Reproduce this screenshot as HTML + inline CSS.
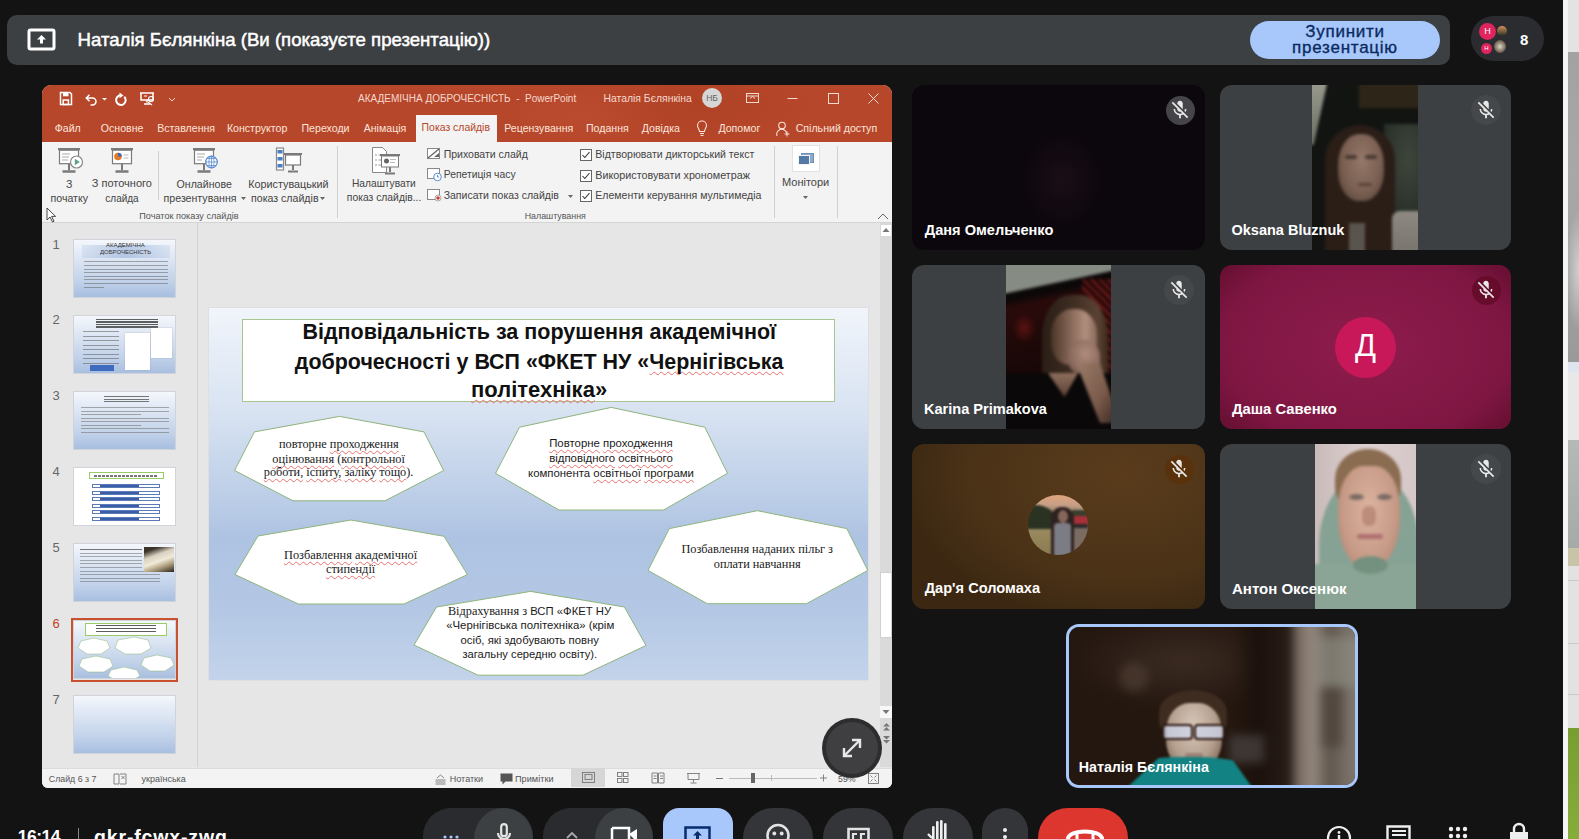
<!DOCTYPE html>
<html><head><meta charset="utf-8">
<style>
*{box-sizing:border-box;margin:0;padding:0}
html,body{width:1579px;height:839px;overflow:hidden;background:#131314;font-family:"Liberation Sans",sans-serif;position:relative}
.a{position:absolute}
svg{position:absolute;overflow:visible}
#ppt{left:42px;top:85px;width:850px;height:703px;background:#e6e6e6;border-radius:9px 9px 6px 6px;overflow:hidden}
.tile{position:absolute;border-radius:12px;overflow:hidden;background:#3c4043}
.name{position:absolute;color:#fff;font-size:14.6px;font-weight:bold;white-space:nowrap;letter-spacing:0px}
.mic{position:absolute;width:29px;height:29px;border-radius:50%;background:rgba(80,82,86,.85)}
.sq{text-decoration:underline wavy #e87070;text-decoration-thickness:0.8px;text-underline-offset:1.5px;text-decoration-skip-ink:none}

</style></head>
<body>
<div class="a" style="left:7px;top:15px;width:1443px;height:50px;background:#3c4043;border-radius:10px"></div>
<svg style="left:27px;top:28px" width="30" height="24" viewBox="0 0 30 24"><rect x="2" y="2" width="25" height="19" rx="1.5" fill="none" stroke="#fff" stroke-width="3"/><path d="M14.5 7 l-4.5 4.5 h3 v4 h3 v-4 h3z" fill="#fff"/></svg><div class="a" style="left:77.6px;top:29.3px;font-size:18.6px;color:#fff;font-weight:normal;white-space:nowrap;line-height:normal;-webkit-text-stroke:0.5px #fff">Наталія Бєлянкіна (Ви (показуєте презентацію))</div>
<div class="a" style="left:1250px;top:21px;width:190px;height:38px;background:#a8c7fa;border-radius:19px"></div>
<div class="a" style="left:1250px;top:22px;width:190px;text-align:center;font-size:17px;line-height:15.5px;color:#0a2b62;letter-spacing:0.75px;padding-top:2px;-webkit-text-stroke:0.35px #0a2b62">Зупинити<br>презентацію</div><div class="a" style="left:1471px;top:16px;width:73px;height:45px;background:#2b2c2f;border-radius:23px"></div>
<div class="a" style="left:1479px;top:23px;width:17px;height:17px;background:#e0245e;border-radius:50%;color:#fff;font-size:9px;line-height:17px;text-align:center">Н</div>
<div class="a" style="left:1481px;top:43px;width:11px;height:11px;background:#e0245e;border-radius:50%;color:#fff;font-size:6px;line-height:11px;text-align:center">Н</div>
<div class="a" style="left:1497px;top:26px;width:10px;height:10px;background:linear-gradient(#d88a5a,#6a5a3a 60%,#2a2a2a);border-radius:50%"></div>
<div class="a" style="left:1494px;top:40px;width:12px;height:13px;background:radial-gradient(circle at 50% 50%,#d8d8c8,#7a6a5a 60%,#333);border-radius:50%"></div>
<div class="a" style="left:1520px;top:30.5px;font-size:15px;color:#fff;font-weight:bold;white-space:nowrap;line-height:normal;">8</div>
<div class="a" style="left:1563px;top:0px;width:16px;height:839px;background:#f4f4f4"></div>
<div class="a" style="left:1568px;top:0px;width:11px;height:52px;background:#e3e3e3"></div>
<div class="a" style="left:1568px;top:52px;width:11px;height:310px;background:linear-gradient(#a2a2a2,#a8a8a8 40%,#9a9a9a)"></div>
<div class="a" style="left:1568px;top:200px;width:11px;height:140px;background:radial-gradient(ellipse 14px 60px at 100% 50%,#d0d0d0,transparent)"></div>
<div class="a" style="left:1568px;top:362px;width:11px;height:10px;background:#dfe5ee"></div>
<div class="a" style="left:1568px;top:372px;width:11px;height:68px;background:#e8e8e8"></div>
<div class="a" style="left:1568px;top:440px;width:11px;height:112px;background:linear-gradient(#b6bab6,#a6aaa6)"></div>
<div class="a" style="left:1568px;top:548px;width:11px;height:18px;background:#c8c4a8"></div>
<div class="a" style="left:1568px;top:566px;width:11px;height:162px;background:#e2e2e2"></div>
<div class="a" style="left:1568px;top:580px;width:11px;height:1px;background:#c8c8c8"></div>
<div class="a" style="left:1568px;top:643px;width:11px;height:1px;background:#c8c8c8"></div>
<div class="a" style="left:1568px;top:694px;width:11px;height:1px;background:#c8c8c8"></div>
<div class="a" style="left:1568px;top:728px;width:11px;height:111px;background:linear-gradient(#789e30,#86ac3c)"></div>

<div id="ppt" class="a">
<div class="a" style="left:0.0px;top:0.0px;width:850.0px;height:57.0px;background:#b7472a"></div>
<div class="a" style="left:478.0px;top:0.0px;width:372.0px;height:57.0px;background:radial-gradient(ellipse 120px 40px at 180px 20px,rgba(160,55,30,.35),transparent),radial-gradient(ellipse 90px 30px at 60px 30px,rgba(200,90,60,.25),transparent)"></div>
<svg style="left:17px;top:5px" width="150" height="18" viewBox="0 0 150 18" fill="none" stroke="#fff" stroke-width="1.5">
 <path d="M1.5 2.5 h9.5 l1.5 1.5 v10.5 h-11z"/><rect x="4" y="2.5" width="5.5" height="3.8" fill="#fff" stroke="none"/><rect x="4.2" y="10" width="5.2" height="4.5"/>
 <path d="M28 8 h5.5 a3.5 3.5 0 0 1 0 7 h-2"/><path d="M30.5 4.8 l-3.2 3.2 l3.2 3.2"/>
 <path d="M43 8 l2.5 2.5 l2.5-2.5z" fill="#fff" stroke="none"/>
 <path d="M62 5.3 a4.8 4.8 0 1 0 3.3 1.4" stroke-width="2"/><path d="M60.5 2.5 l4 3 l-4 2.8z" fill="#fff" stroke="none"/>
 <path d="M81 3 h14 M82 3 v7 h12 v-7 M88 10 v2.5 M85 14 h6" /><path d="M85 6 h3 M89 12 l4 3" stroke-width="1.2"/><circle cx="92" cy="9" r="2.5" stroke-width="1.2"/>
 <path d="M110 8 l3 3 l3-3" stroke-width="1" stroke="#f3d3c8"/>
</svg><div class="a" style="left:316.0px;top:8.3px;font-size:10.0px;color:#f5d9d0;font-weight:normal;font-family:'Liberation Sans';white-space:nowrap;line-height:normal;">АКАДЕМІЧНА ДОБРОЧЕСНІСТЬ&nbsp; - &nbsp;PowerPoint</div>
<div class="a" style="left:561.5px;top:8.1px;font-size:10.4px;color:#f5d9d0;font-weight:normal;font-family:'Liberation Sans';white-space:nowrap;line-height:normal;">Наталія Бєлянкіна</div>
<div class="a" style="left:660.0px;top:3.0px;width:20.0px;height:20.0px;border-radius:50%;background:#d6d6d6;color:#666;font-size:8.5px;line-height:20px;text-align:center">НБ</div>
<svg style="left:700px;top:5px" width="149" height="16" viewBox="0 0 149 16" fill="none" stroke="#f5d9d0" stroke-width="1">
 <rect x="4.5" y="3.5" width="12" height="9"/><path d="M4.5 6 h12"/><path d="M8 8.5 l2.5 -2 l2.5 2" />
 <path d="M45.5 8.5 h10"/>
 <rect x="86.5" y="3.5" width="10" height="10"/>
 <path d="M126.5 3.5 l10 10 M136.5 3.5 l-10 10"/>
</svg><div class="a" style="left:374.0px;top:30.0px;width:81.0px;height:27.0px;background:#f3f3f3"></div>
<div class="a" style="left:12.7px;top:37.0px;font-size:10.6px;color:#fbe4dc;font-weight:normal;font-family:'Liberation Sans';white-space:nowrap;line-height:normal;">Файл</div>
<div class="a" style="left:58.8px;top:37.0px;font-size:10.6px;color:#fbe4dc;font-weight:normal;font-family:'Liberation Sans';white-space:nowrap;line-height:normal;">Основне</div>
<div class="a" style="left:115.2px;top:37.0px;font-size:10.6px;color:#fbe4dc;font-weight:normal;font-family:'Liberation Sans';white-space:nowrap;line-height:normal;">Вставлення</div>
<div class="a" style="left:184.9px;top:37.0px;font-size:10.6px;color:#fbe4dc;font-weight:normal;font-family:'Liberation Sans';white-space:nowrap;line-height:normal;">Конструктор</div>
<div class="a" style="left:259.5px;top:37.0px;font-size:10.6px;color:#fbe4dc;font-weight:normal;font-family:'Liberation Sans';white-space:nowrap;line-height:normal;">Переходи</div>
<div class="a" style="left:321.7px;top:37.0px;font-size:10.6px;color:#fbe4dc;font-weight:normal;font-family:'Liberation Sans';white-space:nowrap;line-height:normal;">Анімація</div>
<div class="a" style="left:462.2px;top:37.0px;font-size:10.6px;color:#fbe4dc;font-weight:normal;font-family:'Liberation Sans';white-space:nowrap;line-height:normal;">Рецензування</div>
<div class="a" style="left:544.0px;top:37.0px;font-size:10.6px;color:#fbe4dc;font-weight:normal;font-family:'Liberation Sans';white-space:nowrap;line-height:normal;">Подання</div>
<div class="a" style="left:599.8px;top:37.0px;font-size:10.6px;color:#fbe4dc;font-weight:normal;font-family:'Liberation Sans';white-space:nowrap;line-height:normal;">Довідка</div>
<div class="a" style="left:676.4px;top:37.0px;font-size:10.6px;color:#fbe4dc;font-weight:normal;font-family:'Liberation Sans';white-space:nowrap;line-height:normal;">Допомог</div>
<div class="a" style="left:753.7px;top:37.0px;font-size:10.6px;color:#fbe4dc;font-weight:normal;font-family:'Liberation Sans';white-space:nowrap;line-height:normal;">Спільний доступ</div>
<div class="a" style="left:379.6px;top:37.1px;font-size:10.45px;color:#b7472a;font-weight:normal;font-family:'Liberation Sans';white-space:nowrap;line-height:normal;">Показ слайдів</div>
<svg style="left:653px;top:35px" width="14" height="18" viewBox="0 0 14 18" fill="none" stroke="#fbe4dc" stroke-width="1.1"><path d="M4.5 11.5 C4.5 9 2.5 8 2.5 5.5 a4.5 4.5 0 0 1 9 0 C11.5 8 9.5 9 9.5 11.5z M5 13.5 h4 M5.5 15.5 h3"/></svg><svg style="left:734px;top:36px" width="15" height="16" viewBox="0 0 15 16" fill="none" stroke="#fbe4dc" stroke-width="1.1"><circle cx="6" cy="4.5" r="3.3"/><path d="M1 15 a5 5 0 0 1 9.5 -3.5 M11 10.5 v5 M8.5 13 h5"/></svg><div class="a" style="left:0.0px;top:57.0px;width:850.0px;height:80.0px;background:#f3f3f3"></div>
<div class="a" style="left:0.0px;top:137.0px;width:850.0px;height:1.0px;background:#d5d5d5"></div>
<svg style="left:14px;top:62px" width="28" height="28" viewBox="0 0 28 28" fill="none" stroke="#7a7a7a" stroke-width="1.2">
 <rect x="2" y="1" width="22" height="2.2" fill="#7a7a7a" stroke="none"/><rect x="3.5" y="3.2" width="19" height="13.5" fill="#fff"/>
 <path d="M13 16.7 v6.5" stroke-width="2"/><path d="M6.5 24.5 h13" stroke-width="2.5"/>
 <path d="M6 7 h8 M6 10 h7 M6 13 h6" stroke="#aaa"/><circle cx="20.5" cy="15" r="6" fill="#fff" stroke="#888"/><path d="M18.8 11.8 v6.4 l5-3.2z" fill="#5e9e8a" stroke="none"/></svg><svg style="left:67px;top:62px" width="28" height="28" viewBox="0 0 28 28" fill="none" stroke="#7a7a7a" stroke-width="1.2">
 <rect x="2" y="1" width="22" height="2.2" fill="#7a7a7a" stroke="none"/><rect x="3.5" y="3.2" width="19" height="13.5" fill="#fff"/>
 <path d="M13 16.7 v6.5" stroke-width="2"/><path d="M6.5 24.5 h13" stroke-width="2.5"/>
 <circle cx="9" cy="9.5" r="3.8" fill="#e57a2a" stroke="none"/><path d="M9 5.7 a3.8 3.8 0 0 1 3.8 3.8 h-3.8z" fill="#3b6bb5" stroke="none"/><path d="M14.5 8 h5 M14.5 11 h5" stroke="#bbb"/></svg><div class="a" style="left:116.0px;top:66.0px;width:1.0px;height:49.0px;background:#d0d0d0"></div>
<svg style="left:149px;top:62px" width="28" height="28" viewBox="0 0 28 28" fill="none" stroke="#7a7a7a" stroke-width="1.2">
 <rect x="2" y="1" width="22" height="2.2" fill="#7a7a7a" stroke="none"/><rect x="3.5" y="3.2" width="19" height="13.5" fill="#fff"/>
 <path d="M13 16.7 v6.5" stroke-width="2"/><path d="M6.5 24.5 h13" stroke-width="2.5"/>
 <path d="M6 7 h8 M6 10 h7 M6 13 h5" stroke="#aaa"/><circle cx="20.5" cy="15" r="5.8" fill="#fff" stroke="#5b8bd0"/><path d="M14.7 15 h11.6 M20.5 9.2 v11.6 M16 11.5 h9 M16 18.5 h9" stroke="#5b8bd0" stroke-width="0.8"/><ellipse cx="20.5" cy="15" rx="2.6" ry="5.8" stroke="#5b8bd0" stroke-width="0.8"/></svg><svg style="left:234px;top:62px" width="28" height="28" viewBox="0 0 28 28" fill="none" stroke="#7a7a7a" stroke-width="1.2">
 <rect x="0.5" y="1" width="7" height="22" fill="#fff" stroke="#888"/><rect x="1.5" y="3" width="5" height="3.5" fill="#4a7fc4" stroke="none"/><rect x="1.5" y="10" width="5" height="3.5" fill="#4a7fc4" stroke="none"/><rect x="1.5" y="17" width="5" height="3.5" fill="#4a7fc4" stroke="none"/>
 <rect x="8" y="6" width="18" height="2" fill="#7a7a7a" stroke="none"/><rect x="9.5" y="8" width="15" height="10" fill="#fff"/><path d="M17 18 v5" stroke-width="2"/><path d="M12 24.5 h10" stroke-width="2.2"/></svg><div class="a" style="left:24.0px;top:92.6px;font-size:10.6px;color:#444;font-weight:normal;font-family:'Liberation Sans';white-space:nowrap;line-height:normal;">З</div>
<div class="a" style="left:8.5px;top:107.1px;font-size:10.6px;color:#444;font-weight:normal;font-family:'Liberation Sans';white-space:nowrap;line-height:normal;">початку</div>
<div class="a" style="left:49.8px;top:92.4px;font-size:11.0px;color:#444;font-weight:normal;font-family:'Liberation Sans';white-space:nowrap;line-height:normal;">З поточного</div>
<div class="a" style="left:63.3px;top:107.5px;font-size:10.0px;color:#444;font-weight:normal;font-family:'Liberation Sans';white-space:nowrap;line-height:normal;">слайда</div>
<div class="a" style="left:134.6px;top:92.6px;font-size:10.6px;color:#444;font-weight:normal;font-family:'Liberation Sans';white-space:nowrap;line-height:normal;">Онлайнове</div>
<div class="a" style="left:121.6px;top:107.1px;font-size:10.6px;color:#444;font-weight:normal;font-family:'Liberation Sans';white-space:nowrap;line-height:normal;">презентування</div>
<div class="a" style="left:206.2px;top:92.5px;font-size:10.8px;color:#444;font-weight:normal;font-family:'Liberation Sans';white-space:nowrap;line-height:normal;">Користувацький</div>
<div class="a" style="left:209.0px;top:107.1px;font-size:10.6px;color:#444;font-weight:normal;font-family:'Liberation Sans';white-space:nowrap;line-height:normal;">показ слайдів</div>
<svg style="left:199px;top:111px" width="140" height="6" viewBox="0 0 140 6"><path d="M0 1 h5 l-2.5 3z" fill="#666"/><path d="M79 1 h5 l-2.5 3z" fill="#666"/></svg><div class="a" style="left:97.3px;top:125.5px;font-size:9.15px;color:#555;font-weight:normal;font-family:'Liberation Sans';white-space:nowrap;line-height:normal;">Початок показу слайдів</div>
<div class="a" style="left:295.0px;top:61.0px;width:1.0px;height:72.0px;background:#d0d0d0"></div>
<svg style="left:329px;top:61px" width="30" height="30" viewBox="0 0 30 30" fill="none" stroke="#888" stroke-width="1">
 <path d="M1.5 1.5 h10 l4 4 v21 h-14z" fill="#fff"/><path d="M4 9 h2 M4 14 h2 M4 19 h2 M7.5 9 h4 M7.5 14 h3 M7.5 19 h3" stroke="#999"/>
 <rect x="9" y="8" width="20" height="2" fill="#7a7a7a" stroke="none"/><rect x="10.5" y="10" width="17" height="11" fill="#fff" stroke="#7a7a7a"/><circle cx="15.5" cy="15" r="2.5" fill="#666" stroke="none"/><path d="M19 13.5 h6 M19 16.5 h5" stroke="#bbb"/><path d="M19 21 v5" stroke="#7a7a7a" stroke-width="2"/><path d="M14 27.5 h10" stroke="#7a7a7a" stroke-width="2"/></svg><div class="a" style="left:310.0px;top:92.9px;font-size:10.2px;color:#444;font-weight:normal;font-family:'Liberation Sans';white-space:nowrap;line-height:normal;">Налаштувати</div>
<div class="a" style="left:304.8px;top:107.3px;font-size:10.35px;color:#444;font-weight:normal;font-family:'Liberation Sans';white-space:nowrap;line-height:normal;">показ слайдів...</div>
<svg style="left:385px;top:62px" width="16" height="55" viewBox="0 0 16 55" fill="none" stroke="#888" stroke-width="1">
 <rect x="0.5" y="1.5" width="12" height="10" fill="#fff"/><path d="M1 11 l11 -9" stroke="#666" stroke-width="1.3"/><path d="M7 10 l5-4 v4z" fill="#666" stroke="none"/>
 <rect x="0.5" y="21.5" width="12" height="10" fill="#fff"/><circle cx="10.5" cy="30" r="3.8" fill="#fff" stroke="#5a8fd0"/><path d="M10.5 28 v2 h1.5" stroke="#5a8fd0"/>
 <rect x="0.5" y="42.5" width="12" height="10" fill="#fff"/><circle cx="11" cy="51" r="3" fill="#fff" stroke="#aaa"/><circle cx="11" cy="51" r="1.8" fill="#d04030" stroke="none"/>
</svg><div class="a" style="left:401.7px;top:63.2px;font-size:10.5px;color:#444;font-weight:normal;font-family:'Liberation Sans';white-space:nowrap;line-height:normal;">Приховати слайд</div>
<div class="a" style="left:401.7px;top:83.8px;font-size:10.35px;color:#444;font-weight:normal;font-family:'Liberation Sans';white-space:nowrap;line-height:normal;">Репетиція часу</div>
<div class="a" style="left:401.7px;top:104.2px;font-size:10.5px;color:#444;font-weight:normal;font-family:'Liberation Sans';white-space:nowrap;line-height:normal;">Записати показ слайдів</div>
<svg style="left:526px;top:109px" width="6" height="5"><path d="M0 1 h5 l-2.5 3z" fill="#666"/></svg><svg style="left:537.5px;top:64.0px" width="12" height="12" viewBox="0 0 12 12"><rect x="0.5" y="0.5" width="11" height="11" fill="#fff" stroke="#666"/><path d="M2.5 6 l2.3 2.5 l4.7 -5.5" fill="none" stroke="#333" stroke-width="1.1"/></svg><div class="a" style="left:553.3px;top:63.2px;font-size:10.55px;color:#444;font-weight:normal;font-family:'Liberation Sans';white-space:nowrap;line-height:normal;">Відтворювати дикторський текст</div>
<svg style="left:537.5px;top:84.5px" width="12" height="12" viewBox="0 0 12 12"><rect x="0.5" y="0.5" width="11" height="11" fill="#fff" stroke="#666"/><path d="M2.5 6 l2.3 2.5 l4.7 -5.5" fill="none" stroke="#333" stroke-width="1.1"/></svg><div class="a" style="left:553.3px;top:83.6px;font-size:10.75px;color:#444;font-weight:normal;font-family:'Liberation Sans';white-space:nowrap;line-height:normal;">Використовувати хронометраж</div>
<svg style="left:537.5px;top:105.0px" width="12" height="12" viewBox="0 0 12 12"><rect x="0.5" y="0.5" width="11" height="11" fill="#fff" stroke="#666"/><path d="M2.5 6 l2.3 2.5 l4.7 -5.5" fill="none" stroke="#333" stroke-width="1.1"/></svg><div class="a" style="left:553.3px;top:104.2px;font-size:10.55px;color:#444;font-weight:normal;font-family:'Liberation Sans';white-space:nowrap;line-height:normal;">Елементи керування мультимедіа</div>
<div class="a" style="left:482.7px;top:125.7px;font-size:8.85px;color:#555;font-weight:normal;font-family:'Liberation Sans';white-space:nowrap;line-height:normal;">Налаштування</div>
<div class="a" style="left:732.0px;top:61.0px;width:1.0px;height:72.0px;background:#d0d0d0"></div>
<div class="a" style="left:750.0px;top:60.0px;width:28.0px;height:27.0px;background:#fff;border:1px solid #e2e2e2"></div>
<svg style="left:756px;top:68px" width="16" height="12" viewBox="0 0 16 12"><rect x="3.5" y="0.5" width="12" height="9" fill="#8eaacb" stroke="#6f8fb5" stroke-width="1"/><rect x="0.5" y="2.5" width="11" height="9" fill="#5479a6" stroke="#f3f3f3" stroke-width="1"/></svg><div class="a" style="left:740.0px;top:90.9px;font-size:11.0px;color:#444;font-weight:normal;font-family:'Liberation Sans';white-space:nowrap;line-height:normal;">Монітори</div>
<svg style="left:761px;top:110px" width="6" height="5"><path d="M0 1 h5 l-2.5 3z" fill="#666"/></svg><div class="a" style="left:795.0px;top:61.0px;width:1.0px;height:72.0px;background:#d0d0d0"></div>
<svg style="left:835px;top:128px" width="12" height="7" viewBox="0 0 12 7" fill="none" stroke="#666" stroke-width="1"><path d="M1 6 l5 -5 l5 5"/></svg><svg style="left:4px;top:122px" width="12" height="16" viewBox="0 0 12 16"><path d="M1 1 v12 l3-3 l2.5 5 l1.5-.8 l-2.4-4.8 h4z" fill="#fff" stroke="#333" stroke-width="0.9"/></svg><div class="a" style="left:0.0px;top:138.0px;width:850.0px;height:544.0px;background:#e6e6e6"></div>
<div class="a" style="left:155.0px;top:138.0px;width:1.0px;height:544.0px;background:#d2d2d2"></div>
<div class="a" style="left:10.5px;top:151.6px;font-size:13px;color:#666;font-weight:normal;font-family:'Liberation Sans';white-space:nowrap;line-height:normal;">1</div>
<div class="a" style="left:10.5px;top:227.4px;font-size:13px;color:#666;font-weight:normal;font-family:'Liberation Sans';white-space:nowrap;line-height:normal;">2</div>
<div class="a" style="left:10.5px;top:303.2px;font-size:13px;color:#666;font-weight:normal;font-family:'Liberation Sans';white-space:nowrap;line-height:normal;">3</div>
<div class="a" style="left:10.5px;top:379.2px;font-size:13px;color:#666;font-weight:normal;font-family:'Liberation Sans';white-space:nowrap;line-height:normal;">4</div>
<div class="a" style="left:10.5px;top:455.2px;font-size:13px;color:#666;font-weight:normal;font-family:'Liberation Sans';white-space:nowrap;line-height:normal;">5</div>
<div class="a" style="left:10.5px;top:531.2px;font-size:13px;color:#c43e1c;font-weight:normal;font-family:'Liberation Sans';white-space:nowrap;line-height:normal;">6</div>
<div class="a" style="left:10.5px;top:607.2px;font-size:13px;color:#666;font-weight:normal;font-family:'Liberation Sans';white-space:nowrap;line-height:normal;">7</div>
<div class="a" style="left:30.5px;top:154.4px;width:103.5px;height:59.0px;background:linear-gradient(#f4f7fc,#c3d3ea 70%,#a9bfe0);border:1px solid #d0d4da;overflow:hidden"><div class="a" style="left:8px;top:5px;width:88px;height:13px;background:linear-gradient(90deg,rgba(150,175,215,.2),rgba(150,175,215,.6),rgba(150,175,215,.2))"></div><div class="a" style="left:0;top:2px;width:104px;text-align:center;font-size:6px;line-height:6.5px;color:#333">АКАДЕМІЧНА<br>ДОБРОЧЕСНІСТЬ</div><div class="a" style="left:10px;top:21.0px;width:84px;height:1px;background:#666;opacity:.55"></div><div class="a" style="left:10px;top:24.6px;width:84px;height:1px;background:#666;opacity:.55"></div><div class="a" style="left:10px;top:28.2px;width:84px;height:1px;background:#666;opacity:.55"></div><div class="a" style="left:10px;top:31.8px;width:84px;height:1px;background:#666;opacity:.55"></div><div class="a" style="left:10px;top:35.4px;width:84px;height:1px;background:#666;opacity:.55"></div><div class="a" style="left:10px;top:39.0px;width:84px;height:1px;background:#666;opacity:.55"></div><div class="a" style="left:10px;top:42.6px;width:84px;height:1px;background:#666;opacity:.55"></div><div class="a" style="left:10px;top:46.2px;width:20px;height:1px;background:#666;opacity:.55"></div></div>
<div class="a" style="left:30.5px;top:230.2px;width:103.5px;height:59.0px;background:linear-gradient(#f4f7fc,#c3d3ea 70%,#a9bfe0);border:1px solid #d0d4da;overflow:hidden"><div class="a" style="left:22px;top:3px;width:62px;height:9px;background:repeating-linear-gradient(#444 0 1.4px,transparent 1.4px 2.5px);opacity:.85"></div><div class="a" style="left:9px;top:15.0px;width:36px;height:1.2px;background:#666;opacity:.6"></div><div class="a" style="left:9px;top:19.5px;width:36px;height:1.2px;background:#666;opacity:.6"></div><div class="a" style="left:9px;top:24.0px;width:36px;height:1.2px;background:#666;opacity:.6"></div><div class="a" style="left:9px;top:28.5px;width:36px;height:1.2px;background:#666;opacity:.6"></div><div class="a" style="left:9px;top:33.0px;width:36px;height:1.2px;background:#666;opacity:.6"></div><div class="a" style="left:9px;top:37.5px;width:36px;height:1.2px;background:#666;opacity:.6"></div><div class="a" style="left:9px;top:42.0px;width:36px;height:1.2px;background:#666;opacity:.6"></div><div class="a" style="left:9px;top:46.5px;width:36px;height:1.2px;background:#666;opacity:.6"></div><div class="a" style="left:51px;top:17px;width:25px;height:37px;background:#fff;box-shadow:0 0 1px #999"></div><div class="a" style="left:77px;top:12px;width:21px;height:30px;background:#fff;box-shadow:0 0 1px #999"></div><div class="a" style="left:16px;top:49px;width:24px;height:6px;background:#3f6bbf"></div></div>
<div class="a" style="left:30.5px;top:306.0px;width:103.5px;height:59.0px;background:linear-gradient(#f4f7fc,#c3d3ea 70%,#a9bfe0);border:1px solid #d0d4da;overflow:hidden"><div class="a" style="left:30px;top:4px;width:45px;height:6px;background:repeating-linear-gradient(#555 0 1.2px,transparent 1.2px 2.6px);opacity:.8"></div><div class="a" style="left:7px;top:15.0px;width:88px;height:1px;background:#777;opacity:.6"></div><div class="a" style="left:7px;top:18.5px;width:88px;height:1px;background:#777;opacity:.6"></div><div class="a" style="left:7px;top:22.0px;width:60px;height:1px;background:#777;opacity:.6"></div><div class="a" style="left:7px;top:25.5px;width:88px;height:1px;background:#777;opacity:.6"></div><div class="a" style="left:7px;top:29.0px;width:88px;height:1px;background:#777;opacity:.6"></div><div class="a" style="left:7px;top:32.5px;width:60px;height:1px;background:#777;opacity:.6"></div><div class="a" style="left:7px;top:36.0px;width:88px;height:1px;background:#777;opacity:.6"></div><div class="a" style="left:7px;top:39.5px;width:88px;height:1px;background:#777;opacity:.6"></div></div>
<div class="a" style="left:30.5px;top:382.0px;width:103.5px;height:59.0px;background:#fff;border:1px solid #d0d4da;overflow:hidden"><div class="a" style="left:15px;top:4px;width:75px;height:7px;background:#fff;border:1px solid #9c6"></div><div class="a" style="left:20px;top:6.5px;width:64px;height:2px;background:repeating-linear-gradient(90deg,#555 0 3px,transparent 3px 4px);opacity:.8"></div><div class="a" style="left:18px;top:16.0px;width:68px;height:4px;border:0.8px solid #5a7ab8;background:linear-gradient(90deg,transparent 0 10%,#3a5da8 10% 70%,transparent 70%)"></div><div class="a" style="left:18px;top:22.5px;width:68px;height:4px;border:0.8px solid #5a7ab8;background:linear-gradient(90deg,transparent 0 10%,#3a5da8 10% 70%,transparent 70%)"></div><div class="a" style="left:18px;top:29.0px;width:68px;height:4px;border:0.8px solid #5a7ab8;background:linear-gradient(90deg,transparent 0 10%,#3a5da8 10% 70%,transparent 70%)"></div><div class="a" style="left:18px;top:35.5px;width:68px;height:4px;border:0.8px solid #5a7ab8;background:linear-gradient(90deg,transparent 0 10%,#3a5da8 10% 70%,transparent 70%)"></div><div class="a" style="left:18px;top:42.0px;width:68px;height:4px;border:0.8px solid #5a7ab8;background:linear-gradient(90deg,transparent 0 10%,#3a5da8 10% 70%,transparent 70%)"></div><div class="a" style="left:18px;top:48.5px;width:68px;height:4px;border:0.8px solid #5a7ab8;background:linear-gradient(90deg,transparent 0 10%,#3a5da8 10% 70%,transparent 70%)"></div></div>
<div class="a" style="left:30.5px;top:458.0px;width:103.5px;height:59.0px;background:linear-gradient(#f4f7fc,#c3d3ea 70%,#a9bfe0);border:1px solid #d0d4da;overflow:hidden"><div class="a" style="left:6px;top:5.0px;width:62px;height:1px;background:#555;opacity:0.8"></div><div class="a" style="left:6px;top:8.6px;width:62px;height:1px;background:#555;opacity:0.45"></div><div class="a" style="left:6px;top:12.2px;width:62px;height:1px;background:#555;opacity:0.45"></div><div class="a" style="left:6px;top:15.8px;width:62px;height:1px;background:#555;opacity:0.45"></div><div class="a" style="left:6px;top:19.4px;width:62px;height:1px;background:#555;opacity:0.45"></div><div class="a" style="left:6px;top:23.0px;width:62px;height:1px;background:#555;opacity:0.45"></div><div class="a" style="left:6px;top:26.6px;width:80px;height:1px;background:#555;opacity:0.45"></div><div class="a" style="left:6px;top:30.2px;width:80px;height:1px;background:#555;opacity:0.45"></div><div class="a" style="left:6px;top:33.8px;width:80px;height:1px;background:#555;opacity:0.45"></div><div class="a" style="left:6px;top:37.4px;width:80px;height:1px;background:#555;opacity:0.45"></div><div class="a" style="left:70px;top:3px;width:30px;height:25px;background:linear-gradient(160deg,#3a342a 0 15%,#d8d0c0 35%,#f0ead8 55%,#a89878 75%,#2a241c)"></div></div>
<div class="a" style="left:28.5px;top:532.5px;width:107.5px;height:64.0px;border:2px solid #c9512f"></div>
<div class="a" style="left:30.5px;top:534.5px;width:103.5px;height:59.0px;background:linear-gradient(#f4f7fc,#c3d3ea 70%,#a9bfe0);border:1px solid #d0d4da;overflow:hidden"><div class="a" style="left:11px;top:2px;width:82px;height:13px;background:#fff;border:0.8px solid #9c6"></div><div class="a" style="left:22px;top:4px;width:60px;height:9px;background:repeating-linear-gradient(#333 0 1.2px,transparent 1.2px 3px);opacity:.8"></div><svg style="left:0;top:0" width="104" height="59" viewBox="0 0 104 59" fill="#fff" stroke="#8ab77a" stroke-width=".5"><path d="M20 17 l13 3 l3 7 l-9 6 h-14 l-9-6 l3-7z"/><path d="M60 16 l14 3 l3 8 l-10 6 h-16 l-10-6 l3-8z"/><path d="M22 35 l14 3 l3 7 l-9 6 h-16 l-9-6 l3-7z"/><path d="M83 34 l14 3 l3 7 l-9 6 h-15 l-9-6 l3-7z"/><path d="M50 46 l13 3 l3 6 l-9 5 h-14 l-9-5 l3-6z"/></svg></div>
<div class="a" style="left:30.5px;top:610.0px;width:103.5px;height:59.0px;background:linear-gradient(#f4f7fc,#c3d3ea 70%,#a9bfe0);border:1px solid #d0d4da;overflow:hidden"></div>
<div class="a" style="left:167.4px;top:223.3px;width:659.1px;height:371.4px;background:linear-gradient(180deg,#f1f5fb 0%,#d6e1f1 30%,#aec3e2 62%,#b4c8e5 82%,#c3d3ea 100%);box-shadow:0 0 1px #bbb"></div>
<div class="a" style="left:200.4px;top:234.0px;width:593.1px;height:83.4px;background:#fff;border:1px solid #a8c690"></div>
<div class="a" style="left:260.4px;top:234.9px;font-size:21.5px;color:#111;font-weight:bold;font-family:'Liberation Sans';white-space:nowrap;line-height:normal;">Відповідальність за порушення академічної</div>
<div class="a" style="left:252.8px;top:264.6px;font-size:21.45px;color:#111;font-weight:bold;font-family:'Liberation Sans';white-space:nowrap;line-height:normal;">доброчесності у ВСП «ФКЕТ НУ «<span class='sq'>Чернігівська</span></div>
<div class="a" style="left:429.0px;top:292.1px;font-size:22px;color:#111;font-weight:bold;font-family:'Liberation Sans';white-space:nowrap;line-height:normal;"><span class='sq'>політехніка</span>»</div>
<svg style="left:0;top:0" width="849" height="702" fill="#fff" stroke="#8fb47c" stroke-width="1"><polygon points="297.5,331.4 382.0,346.9 401.7,385.5 343.0,415.8 251.0,415.8 192.6,385.5 212.4,346.9"/><polygon points="569.2,322.4 662.8,342.2 685.5,388.3 621.6,425.0 517.0,425.0 453.6,388.3 477.5,342.2"/><polygon points="309.0,435.0 402.0,451.3 425.4,489.6 362.0,519.0 256.4,519.0 193.0,489.6 216.0,451.0"/><polygon points="715.4,425.7 804.8,443.6 825.8,485.4 764.4,518.7 665.3,518.7 606.0,485.4 627.4,443.6"/><polygon points="488.5,506.4 582.4,522.0 604.0,560.5 541.0,590.2 436.0,590.2 372.0,560.0 394.6,522.0"/></svg><div class="a" style="left:146.9px;width:300px;text-align:center;top:351.7px;font-size:12.3px;color:#1a1a1a;font-family:'Liberation Serif';white-space:nowrap;line-height:normal">повторне <span class='sq'>проходження</span></div>
<div class="a" style="left:146.6px;width:300px;text-align:center;top:366.7px;font-size:12.3px;color:#1a1a1a;font-family:'Liberation Serif';white-space:nowrap;line-height:normal"><span class='sq'>оцінювання</span> (<span class='sq'>контрольної</span></div>
<div class="a" style="left:146.6px;width:300px;text-align:center;top:380.3px;font-size:12.25px;color:#1a1a1a;font-family:'Liberation Serif';white-space:nowrap;line-height:normal"><span class='sq'>роботи,</span> <span class='sq'>іспиту,</span> <span class='sq'>заліку</span> <span class='sq'>тощо</span>).</div>
<div class="a" style="left:419.0px;width:300px;text-align:center;top:352.4px;font-size:11.4px;color:#1a1a1a;font-family:'Liberation Sans';white-space:nowrap;line-height:normal"><span class='sq'>Повторне</span> <span class='sq'>проходження</span></div>
<div class="a" style="left:419.0px;width:300px;text-align:center;top:367.2px;font-size:11.4px;color:#1a1a1a;font-family:'Liberation Sans';white-space:nowrap;line-height:normal"><span class='sq'>відповідного</span> <span class='sq'>освітнього</span></div>
<div class="a" style="left:419.0px;width:300px;text-align:center;top:381.9px;font-size:11.4px;color:#1a1a1a;font-family:'Liberation Sans';white-space:nowrap;line-height:normal">компонента <span class='sq'>освітньої</span> <span class='sq'>програми</span></div>
<div class="a" style="left:158.6px;width:300px;text-align:center;top:462.9px;font-size:12.35px;color:#1a1a1a;font-family:'Liberation Serif';white-space:nowrap;line-height:normal"><span class='sq'>Позбавлення</span> <span class='sq'>академічної</span></div>
<div class="a" style="left:158.6px;width:300px;text-align:center;top:477.3px;font-size:12.35px;color:#1a1a1a;font-family:'Liberation Serif';white-space:nowrap;line-height:normal"><span class='sq'>стипендії</span></div>
<div class="a" style="left:565.2px;width:300px;text-align:center;top:457.4px;font-size:12.3px;color:#1a1a1a;font-family:'Liberation Serif';white-space:nowrap;line-height:normal">Позбавлення наданих пільг з</div>
<div class="a" style="left:565.2px;width:300px;text-align:center;top:471.8px;font-size:12.3px;color:#1a1a1a;font-family:'Liberation Serif';white-space:nowrap;line-height:normal">оплати навчання</div>
<div class="a" style="left:337.5px;width:300px;text-align:center;top:519.4px;font-size:11.3px;color:#1a1a1a;font-family:'Liberation Sans';white-space:nowrap;line-height:normal"><span style="font-family:'Liberation Serif';font-size:12.3px">Відрахування з</span> ВСП «ФКЕТ НУ</div>
<div class="a" style="left:338.2px;width:300px;text-align:center;top:534.4px;font-size:11.4px;color:#1a1a1a;font-family:'Liberation Sans';white-space:nowrap;line-height:normal">«Чернігівська політехніка» (крім</div>
<div class="a" style="left:337.7px;width:300px;text-align:center;top:549.0px;font-size:11.3px;color:#1a1a1a;font-family:'Liberation Sans';white-space:nowrap;line-height:normal">осіб, які здобувають повну</div>
<div class="a" style="left:337.8px;width:300px;text-align:center;top:563.3px;font-size:11.2px;color:#1a1a1a;font-family:'Liberation Sans';white-space:nowrap;line-height:normal">загальну середню освіту).</div>
<div class="a" style="left:838.0px;top:138.0px;width:12.0px;height:544.0px;background:#dadada"></div>
<div class="a" style="left:838.0px;top:139.0px;width:12.0px;height:13.0px;background:#fff;border:1px solid #d8d8d8"></div>
<svg style="left:840px;top:142px" width="9" height="6"><path d="M0.5 5 h7 l-3.5-4z" fill="#777"/></svg><div class="a" style="left:838.0px;top:487.0px;width:12.0px;height:66.0px;background:#fff;border:1px solid #d0d0d0"></div>
<div class="a" style="left:838.0px;top:621.0px;width:12.0px;height:12.0px;background:#f8f8f8"></div>
<svg style="left:840px;top:624px" width="9" height="6"><path d="M0.5 1 h7 l-3.5 4z" fill="#777"/></svg><svg style="left:840px;top:637px" width="9" height="20" viewBox="0 0 9 20" fill="#777"><path d="M1 4.5 h7 l-3.5-3.5z M1 8.5 h7 l-3.5-3.5z"/><path d="M1 14 h7 l-3.5 3.5z M1 18 h7 l-3.5 3.5z"/></svg><div class="a" style="left:0.0px;top:683.0px;width:850.0px;height:20.0px;background:#f3f3f3;border-top:1px solid #dcdcdc"></div>
<div class="a" style="left:6.8px;top:688.7px;font-size:8.8px;color:#555;font-weight:normal;font-family:'Liberation Sans';white-space:nowrap;line-height:normal;">Слайд 6 з 7</div>
<svg style="left:71px;top:688px" width="14" height="12" viewBox="0 0 14 12" fill="none" stroke="#777" stroke-width="0.9"><path d="M1 1 h5 v10 h-5z M7 1 h6 v10 h-6"/><path d="M8.5 3 l3 3 M11.5 3 l-3 3"/></svg><div class="a" style="left:99.5px;top:688.6px;font-size:9.0px;color:#555;font-weight:normal;font-family:'Liberation Sans';white-space:nowrap;line-height:normal;">українська</div>
<svg style="left:393px;top:688px" width="11" height="12" viewBox="0 0 11 12" fill="none" stroke="#777" stroke-width="0.9"><path d="M2 5 l3.5-3 l3.5 3"/><path d="M0.5 7 h10 M0.5 9 h10 M0.5 11 h10"/></svg><div class="a" style="left:407.8px;top:688.6px;font-size:9.0px;color:#555;font-weight:normal;font-family:'Liberation Sans';white-space:nowrap;line-height:normal;">Нотатки</div>
<svg style="left:458px;top:688px" width="13" height="12" viewBox="0 0 13 12"><path d="M0.5 0.5 h12 v8 h-7 l-3 3 v-3 h-2z" fill="#555"/></svg><div class="a" style="left:473.0px;top:688.5px;font-size:9.2px;color:#555;font-weight:normal;font-family:'Liberation Sans';white-space:nowrap;line-height:normal;">Примітки</div>
<div class="a" style="left:528.5px;top:683.0px;width:34.9px;height:19.0px;background:#d6d6d6"></div>
<svg style="left:540px;top:686px" width="160" height="14" viewBox="0 0 160 14" fill="none" stroke="#777" stroke-width="0.9">
 <rect x="0.5" y="1.5" width="12" height="10"/><rect x="3" y="3.5" width="7" height="5"/>
 <rect x="35.5" y="1.5" width="4.5" height="4"/><rect x="41.5" y="1.5" width="4.5" height="4"/><rect x="35.5" y="7.5" width="4.5" height="4"/><rect x="41.5" y="7.5" width="4.5" height="4"/>
 <path d="M70 2 h5.5 v10 h-5.5z M76.5 2 h5.5 v10 h-5.5z M71.5 5 h3 M71.5 7.5 h3 M78 5 h3 M78 7.5 h3"/>
 <path d="M105 2.5 h13 M106 2.5 v6 h11 v-6 M111.5 8.5 v3 M108.5 12 h6"/>
</svg><div class="a" style="left:674.0px;top:692.5px;width:7.0px;height:1.0px;background:#777"></div>
<div class="a" style="left:686.5px;top:692.5px;width:88.2px;height:1.0px;background:#bbb"></div>
<div class="a" style="left:709.0px;top:688.0px;width:4.0px;height:10.0px;background:#666"></div>
<div class="a" style="left:729.0px;top:690.0px;width:1.0px;height:6.0px;background:#bbb"></div>
<svg style="left:778px;top:689px" width="8" height="8" viewBox="0 0 8 8" stroke="#777" stroke-width="0.9"><path d="M0 4 h7 M3.5 0.5 v7"/></svg><div class="a" style="left:796.0px;top:688.7px;font-size:8.8px;color:#555;font-weight:normal;font-family:'Liberation Sans';white-space:nowrap;line-height:normal;">59%</div>
<svg style="left:826px;top:688px" width="11" height="11" viewBox="0 0 11 11" fill="none" stroke="#777" stroke-width="0.9"><rect x="0.5" y="0.5" width="10" height="10"/><path d="M2.5 2.5 l2 2 M8.5 2.5 l-2 2 M2.5 8.5 l2-2 M8.5 8.5 l-2-2"/></svg>
</div>
<div class="a" style="left:822px;top:718px;width:60px;height:60px;background:#2d2d2f;border-radius:50%"></div>
<div class="a" style="left:826px;top:722px;width:52px;height:52px;background:#3f3f42;border-radius:50%"></div>
<svg style="left:840px;top:736px" width="24" height="24" viewBox="0 0 24 24" fill="none" stroke="#e8e8e8" stroke-width="2.4"><path d="M4 20 L20 4"/><path d="M12 4 h8 v8"/><path d="M4 12 v8 h8"/></svg><div class="a" style="left:912px;top:85px;width:293px;height:165px;border-radius:12px;background:radial-gradient(ellipse 60px 70px at 150px 95px,#1a0e16,#0c070c 70%)"></div>
<div class="a" style="left:1165.5px;top:95.5px;width:29px;height:29px;border-radius:50%;background:rgba(75,77,80,.9)"></div><svg style="left:1169px;top:99px" width="22" height="22" viewBox="0 0 24 24" fill="#e8e8e8"><path d="M19 11h-1.7c0 .74-.16 1.43-.43 2.05l1.23 1.23c.56-.98.9-2.09.9-3.28zm-4.02.17c0-.06.02-.11.02-.17V5c0-1.66-1.34-3-3-3S9 3.34 9 5v.18l5.98 5.99zM4.27 3L3 4.27l6.01 6.01V11c0 1.66 1.33 3 2.99 3 .22 0 .44-.03.65-.08l1.66 1.66c-.71.33-1.5.52-2.31.52-2.76 0-5.3-2.1-5.3-5.1H5c0 3.41 2.72 6.23 6 6.72V21h2v-3.28c.91-.13 1.77-.45 2.54-.9L19.73 21 21 19.73 4.27 3z"/></svg><div class="a" style="left:924.8px;top:222.2px;font-size:14.6px;color:#fff;font-weight:bold;white-space:nowrap;line-height:normal;">Даня Омельченко</div>
<div class="a" style="left:1220px;top:85px;width:291px;height:165px;border-radius:12px;background:#3c4043"></div>
<div class="a" style="left:1312px;top:85px;width:106px;height:165px;overflow:hidden;"><div class="a" style="left:-6px;top:-6px;width:118px;height:177px;background:#121412;filter:blur(1.8px)"><div class="a" style="left:6px;top:6px;width:106px;height:165px"><div class="a" style="left:-6px;top:-6px;width:22px;height:66px;background:linear-gradient(#9a9c90,#6a6e62);clip-path:polygon(0 0,100% 0,35% 100%,0 100%)"></div><div class="a" style="left:47px;top:-6px;width:65px;height:31px;background:#2c2518;border-bottom:2px solid #15120c"></div><div class="a" style="left:72px;top:39px;width:40px;height:88px;background:radial-gradient(ellipse at 60% 40%,#3e463c,#2a322a 70%,#1e231e)"></div><div class="a" style="left:13px;top:40px;width:70px;height:135px;border-radius:36px 36px 6px 6px;background:#2a1e17"></div><div class="a" style="left:26px;top:49px;width:46px;height:67px;border-radius:46% 46% 44% 44%;background:radial-gradient(ellipse at 52% 40%,#94786a,#7a6052 55%,#4a382e)"></div><div class="a" style="left:33px;top:70px;width:12px;height:4px;background:#4a3830;border-radius:2px"></div><div class="a" style="left:53px;top:70px;width:12px;height:4px;background:#4a3830;border-radius:2px"></div><div class="a" style="left:46px;top:98px;width:14px;height:3px;background:#5a4236;border-radius:2px"></div><div class="a" style="left:80px;top:126px;width:30px;height:45px;border-radius:8px 0 0 0;background:linear-gradient(#8e8a82,#76726c)"></div><div class="a" style="left:37px;top:138px;width:16px;height:30px;background:#5a544e"></div><div class="a" style="left:53px;top:116px;width:27px;height:55px;background:#2a1e17"></div></div></div></div>
<div class="a" style="left:1471px;top:95px;width:30px;height:30px;border-radius:50%;background:rgba(70,73,76,.9)"></div>
<div class="a" style="left:1471.5px;top:95.5px;width:29px;height:29px;border-radius:50%;background:transparent"></div><svg style="left:1475px;top:99px" width="22" height="22" viewBox="0 0 24 24" fill="#e8e8e8"><path d="M19 11h-1.7c0 .74-.16 1.43-.43 2.05l1.23 1.23c.56-.98.9-2.09.9-3.28zm-4.02.17c0-.06.02-.11.02-.17V5c0-1.66-1.34-3-3-3S9 3.34 9 5v.18l5.98 5.99zM4.27 3L3 4.27l6.01 6.01V11c0 1.66 1.33 3 2.99 3 .22 0 .44-.03.65-.08l1.66 1.66c-.71.33-1.5.52-2.31.52-2.76 0-5.3-2.1-5.3-5.1H5c0 3.41 2.72 6.23 6 6.72V21h2v-3.28c.91-.13 1.77-.45 2.54-.9L19.73 21 21 19.73 4.27 3z"/></svg><div class="a" style="left:1231.5px;top:222.3px;font-size:14.5px;color:#fff;font-weight:bold;white-space:nowrap;line-height:normal;">Oksana Bluznuk</div>
<div class="a" style="left:912px;top:265px;width:293px;height:164px;border-radius:12px;background:#3c4043"></div>
<div class="a" style="left:1006px;top:265px;width:105px;height:164px;overflow:hidden;"><div class="a" style="left:-6px;top:-6px;width:117px;height:176px;background:#0c0808;filter:blur(1.8px)"><div class="a" style="left:6px;top:6px;width:105px;height:164px"><div class="a" style="left:-6px;top:-6px;width:117px;height:45px;background:linear-gradient(168deg,#868b83 0 50%,transparent 52%)"></div><div class="a" style="left:-6px;top:14px;width:117px;height:120px;background:linear-gradient(168deg,transparent 0 16%,#2a0a0a 22%,#1e0808 50%,#140606 80%);"></div><div class="a" style="left:76px;top:14px;width:32px;height:95px;background:repeating-linear-gradient(45deg,#6a1818 0 3px,#1a0606 3px 6px);opacity:.85"></div><div class="a" style="left:6px;top:48px;width:24px;height:30px;background:radial-gradient(#5a1212,transparent 70%)"></div><div class="a" style="left:36px;top:30px;width:66px;height:100px;border-radius:42% 42% 20% 20%;background:linear-gradient(90deg,#2a1e16,#3a2a20 40%,#5a4232 85%,#3a2a1e)"></div><div class="a" style="left:45px;top:44px;width:46px;height:56px;border-radius:45% 45% 40% 40%;background:linear-gradient(90deg,#4a3426,#8a6a5a 45%,#b08e7e 75%,#8a6a5a)"></div><div class="a" style="left:62px;top:75px;width:32px;height:34px;border-radius:40% 50% 30% 40%;background:radial-gradient(ellipse at 55% 40%,#b08c7c,#86665a 70%,#4a3228)"></div><div class="a" style="left:-6px;top:108px;width:117px;height:62px;background:#0a0808"></div><div class="a" style="left:42px;top:108px;width:30px;height:24px;background:linear-gradient(#8e6e5e,#5a4034);clip-path:polygon(0 0,100% 0,55% 100%)"></div><div class="a" style="left:70px;top:98px;width:40px;height:60px;background:linear-gradient(120deg,#9a7a68,#7a5a4a 60%,#3a2a22);clip-path:polygon(0 0,60% 0,100% 80%,100% 100%,60% 100%)"></div></div></div></div>
<div class="a" style="left:1164px;top:275px;width:30px;height:30px;border-radius:50%;background:rgba(70,73,76,.9)"></div>
<div class="a" style="left:1164.5px;top:275.5px;width:29px;height:29px;border-radius:50%;background:transparent"></div><svg style="left:1168px;top:279px" width="22" height="22" viewBox="0 0 24 24" fill="#e8e8e8"><path d="M19 11h-1.7c0 .74-.16 1.43-.43 2.05l1.23 1.23c.56-.98.9-2.09.9-3.28zm-4.02.17c0-.06.02-.11.02-.17V5c0-1.66-1.34-3-3-3S9 3.34 9 5v.18l5.98 5.99zM4.27 3L3 4.27l6.01 6.01V11c0 1.66 1.33 3 2.99 3 .22 0 .44-.03.65-.08l1.66 1.66c-.71.33-1.5.52-2.31.52-2.76 0-5.3-2.1-5.3-5.1H5c0 3.41 2.72 6.23 6 6.72V21h2v-3.28c.91-.13 1.77-.45 2.54-.9L19.73 21 21 19.73 4.27 3z"/></svg><div class="a" style="left:924px;top:400.8px;font-size:14.55px;color:#fff;font-weight:bold;white-space:nowrap;line-height:normal;">Karina Primakova</div>
<div class="a" style="left:1220px;top:265px;width:291px;height:164px;border-radius:12px;background:radial-gradient(ellipse 180px 120px at 50% 50%,#8e1c4c,#7e1642 80%,#6a1034)"></div>
<div class="a" style="left:1335px;top:317px;width:61px;height:61px;border-radius:50%;background:#c8185a;color:#fff;font-size:31px;line-height:57px;text-align:center">Д</div>
<div class="a" style="left:1471.5px;top:275.5px;width:29px;height:29px;border-radius:50%;background:rgba(100,10,40,.85)"></div><svg style="left:1475px;top:279px" width="22" height="22" viewBox="0 0 24 24" fill="#e8e8e8"><path d="M19 11h-1.7c0 .74-.16 1.43-.43 2.05l1.23 1.23c.56-.98.9-2.09.9-3.28zm-4.02.17c0-.06.02-.11.02-.17V5c0-1.66-1.34-3-3-3S9 3.34 9 5v.18l5.98 5.99zM4.27 3L3 4.27l6.01 6.01V11c0 1.66 1.33 3 2.99 3 .22 0 .44-.03.65-.08l1.66 1.66c-.71.33-1.5.52-2.31.52-2.76 0-5.3-2.1-5.3-5.1H5c0 3.41 2.72 6.23 6 6.72V21h2v-3.28c.91-.13 1.77-.45 2.54-.9L19.73 21 21 19.73 4.27 3z"/></svg><div class="a" style="left:1232px;top:400.6px;font-size:14.8px;color:#fff;font-weight:bold;white-space:nowrap;line-height:normal;">Даша Савенко</div>
<div class="a" style="left:912px;top:444px;width:293px;height:165px;border-radius:12px;background:radial-gradient(ellipse 220px 150px at 72% 18%,#5a3c1c,#4a3217 70%,#3c2812)"></div>
<div class="a" style="left:1028px;top:495px;width:60px;height:60px;overflow:hidden;border-radius:50%;"><div class="a" style="left:-6px;top:-6px;width:72px;height:72px;background:linear-gradient(#dca47c 0 10%,#c8a088 22%,#6a6a50 40%,#8a7a58 70%,#7a6a50);filter:blur(1.0px)"><div class="a" style="left:6px;top:6px;width:60px;height:60px"><div class="a" style="left:-6px;top:10px;width:34px;height:26px;background:#2a3222;border-radius:40% 60% 0 0"></div><div class="a" style="left:44px;top:15px;width:22px;height:14px;background:#3a3e2e"></div><div class="a" style="left:42px;top:33px;width:24px;height:30px;background:#7a6c62"></div><div class="a" style="left:-6px;top:34px;width:32px;height:30px;background:linear-gradient(#9a8a60,#8a7a50)"></div><div class="a" style="left:44px;top:21px;width:18px;height:10px;background:#a83038;border-radius:3px"></div><div class="a" style="left:46px;top:29px;width:14px;height:4px;background:#2a2a2a"></div><div class="a" style="left:23px;top:12px;width:23px;height:50px;border-radius:11px 11px 2px 2px;background:#2e2220"></div><div class="a" style="left:26px;top:28px;width:17px;height:34px;border-radius:4px 4px 0 0;background:#7c7c84"></div><div class="a" style="left:30px;top:15px;width:10px;height:13px;border-radius:50%;background:#86665a"></div></div></div></div>
<div class="a" style="left:1164.5px;top:454.5px;width:29px;height:29px;border-radius:50%;background:rgba(90,50,10,.9)"></div><svg style="left:1168px;top:458px" width="22" height="22" viewBox="0 0 24 24" fill="#e8e8e8"><path d="M19 11h-1.7c0 .74-.16 1.43-.43 2.05l1.23 1.23c.56-.98.9-2.09.9-3.28zm-4.02.17c0-.06.02-.11.02-.17V5c0-1.66-1.34-3-3-3S9 3.34 9 5v.18l5.98 5.99zM4.27 3L3 4.27l6.01 6.01V11c0 1.66 1.33 3 2.99 3 .22 0 .44-.03.65-.08l1.66 1.66c-.71.33-1.5.52-2.31.52-2.76 0-5.3-2.1-5.3-5.1H5c0 3.41 2.72 6.23 6 6.72V21h2v-3.28c.91-.13 1.77-.45 2.54-.9L19.73 21 21 19.73 4.27 3z"/></svg><div class="a" style="left:924.7px;top:580.2px;font-size:14.6px;color:#fff;font-weight:bold;white-space:nowrap;line-height:normal;">Дар'я Соломаха</div>
<div class="a" style="left:1220px;top:444px;width:291px;height:165px;border-radius:12px;background:#3c4043"></div>
<div class="a" style="left:1315px;top:444px;width:101px;height:165px;overflow:hidden;"><div class="a" style="left:-6px;top:-6px;width:113px;height:177px;background:linear-gradient(90deg,#c8b8b8,#ddd0d0 50%,#d4c6c6);filter:blur(1.8px)"><div class="a" style="left:6px;top:6px;width:101px;height:165px"><div class="a" style="left:4px;top:30px;width:100px;height:150px;border-radius:48% 48% 0 0;background:#86a294"></div><div class="a" style="left:20px;top:5px;width:66px;height:60px;border-radius:50% 50% 35% 35%;background:#8a6c50"></div><div class="a" style="left:23px;top:22px;width:62px;height:104px;border-radius:40% 40% 50% 50%;background:radial-gradient(ellipse at 50% 42%,#dcb4a0,#c69a86 60%,#a87a6a)"></div><div class="a" style="left:34px;top:50px;width:15px;height:6px;background:#7a6a64;border-radius:50%"></div><div class="a" style="left:62px;top:50px;width:15px;height:6px;background:#7a6a64;border-radius:50%"></div><div class="a" style="left:47px;top:62px;width:14px;height:20px;background:#b07e6e;border-radius:40%;opacity:.7"></div><div class="a" style="left:42px;top:90px;width:26px;height:5px;background:#b07070;border-radius:3px"></div><div class="a" style="left:-6px;top:120px;width:113px;height:50px;background:#8aa596"></div><div class="a" style="left:38px;top:112px;width:35px;height:18px;background:#74907f;border-radius:50%"></div></div></div></div>
<div class="a" style="left:1471px;top:454px;width:30px;height:30px;border-radius:50%;background:rgba(70,73,76,.9)"></div>
<div class="a" style="left:1471.5px;top:454.5px;width:29px;height:29px;border-radius:50%;background:transparent"></div><svg style="left:1475px;top:458px" width="22" height="22" viewBox="0 0 24 24" fill="#e8e8e8"><path d="M19 11h-1.7c0 .74-.16 1.43-.43 2.05l1.23 1.23c.56-.98.9-2.09.9-3.28zm-4.02.17c0-.06.02-.11.02-.17V5c0-1.66-1.34-3-3-3S9 3.34 9 5v.18l5.98 5.99zM4.27 3L3 4.27l6.01 6.01V11c0 1.66 1.33 3 2.99 3 .22 0 .44-.03.65-.08l1.66 1.66c-.71.33-1.5.52-2.31.52-2.76 0-5.3-2.1-5.3-5.1H5c0 3.41 2.72 6.23 6 6.72V21h2v-3.28c.91-.13 1.77-.45 2.54-.9L19.73 21 21 19.73 4.27 3z"/></svg><div class="a" style="left:1232px;top:580.0px;font-size:15px;color:#fff;font-weight:bold;white-space:nowrap;line-height:normal;">Антон Оксенюк</div>
<div class="a" style="left:1066px;top:624px;width:292px;height:164px;border-radius:13px;background:#a8c7fa"></div>
<div class="a" style="left:1069px;top:627px;width:286px;height:158px;border-radius:10px;overflow:hidden;background:#22150f"><div class="a" style="left:-10px;top:-10px;width:306px;height:178px;filter:blur(5px)"><div class="a" style="left:0px;top:0px;width:306px;height:178px;background:radial-gradient(ellipse 140px 60px at 40% 25%,#3a2a22,#24170f 80%)"></div><div class="a" style="left:60px;top:45px;width:30px;height:30px;background:#4a3a30;border-radius:50%;opacity:.8"></div><div class="a" style="left:175px;top:0px;width:60px;height:178px;background:linear-gradient(90deg,transparent,#1a100c 40%,#2a1e18)"></div><div class="a" style="left:234px;top:0px;width:80px;height:178px;background:linear-gradient(90deg,#6a5e56,#968a80 25%,#5e544c 45%,#7a7268 70%,#8a8478)"></div><div class="a" style="left:258px;top:20px;width:60px;height:50px;background:#8e8e84;opacity:.6"></div><div class="a" style="left:262px;top:70px;width:22px;height:60px;background:#4a4038;opacity:.7"></div><div class="a" style="left:170px;top:118px;width:35px;height:28px;background:#4a4644;opacity:.7"></div></div><div class="a" style="left:-6px;top:-6px;width:298px;height:170px;filter:blur(1.3px)"><div class="a" style="left:96px;top:69px;width:68px;height:44px;border-radius:50% 50% 25% 25%;background:#3e2c20"></div><div class="a" style="left:103px;top:82px;width:56px;height:68px;border-radius:42% 42% 46% 46%;background:radial-gradient(ellipse at 48% 35%,#d8c8ba,#b49e8e 55%,#6a5040)"></div><div class="a" style="left:99px;top:103px;width:31px;height:16px;border:2px solid #2e1a14;border-radius:4px;background:rgba(205,215,235,.75)"></div><div class="a" style="left:131px;top:103px;width:31px;height:16px;border:2px solid #2e1a14;border-radius:4px;background:rgba(205,215,235,.75)"></div><div class="a" style="left:122px;top:132px;width:18px;height:5px;background:#8a6a60;border-radius:3px;opacity:.6"></div><div class="a" style="left:54px;top:136px;width:142px;height:40px;border-radius:45% 45% 0 0;background:#128282;clip-path:polygon(30% 0,80% 0,100% 100%,0 100%)"></div></div></div>
<div class="a" style="left:1078.7px;top:758.5px;font-size:14.25px;color:#fff;font-weight:bold;white-space:nowrap;line-height:normal;">Наталія Бєлянкіна</div>
<div class="a" style="left:17.7px;top:827.2px;font-size:17.5px;color:#fff;font-weight:bold;white-space:nowrap;line-height:normal;letter-spacing:-0.5px">16:14</div>
<div class="a" style="left:78px;top:828px;width:1px;height:11px;background:#888"></div>
<div class="a" style="left:94px;top:826.2px;font-size:19.5px;color:#fff;font-weight:bold;white-space:nowrap;line-height:normal;letter-spacing:0.85px">qkr-fcwx-zwq</div>
<div class="a" style="left:423px;top:808px;width:110px;height:62px;background:#2a2b2e;border-radius:28px"></div>
<div class="a" style="left:474px;top:808px;width:59px;height:62px;background:#3c4043;border-radius:50%"></div>
<div class="a" style="left:543px;top:808px;width:110px;height:62px;background:#2a2b2e;border-radius:28px"></div>
<div class="a" style="left:595px;top:808px;width:58px;height:62px;background:#3c4043;border-radius:50%"></div>
<div class="a" style="left:663px;top:808px;width:70px;height:62px;background:#a8c7fa;border-radius:16px"></div>
<div class="a" style="left:743px;top:808px;width:70px;height:62px;background:#333538;border-radius:30px"></div>
<div class="a" style="left:823px;top:808px;width:70px;height:62px;background:#333538;border-radius:30px"></div>
<div class="a" style="left:903px;top:808px;width:70px;height:62px;background:#333538;border-radius:30px"></div>
<div class="a" style="left:982px;top:808px;width:46px;height:62px;background:#333538;border-radius:23px"></div>
<div class="a" style="left:1038px;top:808px;width:90px;height:62px;background:#dc362e;border-radius:30px"></div>
<svg style="left:442px;top:830px" width="20" height="9"><circle cx="3" cy="7" r="1.6" fill="#a8c7fa"/><circle cx="9" cy="7" r="1.6" fill="#a8c7fa"/><circle cx="15" cy="7" r="1.6" fill="#a8c7fa"/></svg><svg style="left:494px;top:822px" width="20" height="20" viewBox="0 0 20 20"><rect x="7.2" y="2.2" width="5.6" height="12" rx="2.8" fill="none" stroke="#e3e3e3" stroke-width="2.2"/><path d="M4 11 a6 6 0 0 0 12 0" stroke="#e3e3e3" stroke-width="2.2" fill="none"/></svg><svg style="left:565px;top:830px" width="14" height="9"><path d="M2 8 l5-5 l5 5" stroke="#aaa" stroke-width="1.8" fill="none"/></svg><svg style="left:610px;top:826px" width="30" height="16"><path d="M2 2 h17 v14" stroke="#fff" stroke-width="2.5" fill="none"/><path d="M19 8 l8-5 v13" fill="#fff"/><path d="M2 2 v14" stroke="#fff" stroke-width="2.5"/></svg><svg style="left:684px;top:826px" width="28" height="16"><rect x="1.5" y="1.5" width="24" height="16" fill="none" stroke="#062e6f" stroke-width="2.5"/><path d="M13.5 5 l-4.5 4.5 h3 v4 h3 v-4 h3z" fill="#062e6f"/></svg><svg style="left:765px;top:822px" width="26" height="17" viewBox="0 0 26 17"><circle cx="13" cy="13.5" r="10.5" fill="none" stroke="#e3e3e3" stroke-width="2.6"/><circle cx="9.3" cy="11.5" r="1.9" fill="#e3e3e3"/><circle cx="16.7" cy="11.5" r="1.9" fill="#e3e3e3"/></svg><svg style="left:846px;top:827px" width="26" height="13" viewBox="0 0 26 13"><path d="M2.5 13 v-11 h20 v11" fill="none" stroke="#e3e3e3" stroke-width="2.6"/><path d="M11 7 h-4 v6 M19 7 h-4 v6" fill="none" stroke="#e3e3e3" stroke-width="2.2"/></svg><svg style="left:926px;top:820px" width="26" height="20" viewBox="0 0 26 20" fill="#eee"><rect x="6" y="6" width="2.6" height="14" rx="1.3"/><rect x="10" y="1" width="2.6" height="19" rx="1.3"/><rect x="14" y="0" width="2.6" height="20" rx="1.3"/><rect x="18" y="3" width="2.6" height="17" rx="1.3"/><path d="M2 14 l4 4" stroke="#eee" stroke-width="2.4"/></svg><svg style="left:1001px;top:826px" width="8" height="14"><circle cx="4" cy="4" r="2" fill="#eee"/><circle cx="4" cy="11" r="2" fill="#eee"/></svg><svg style="left:1066px;top:824px" width="38" height="15" viewBox="0 0 38 15"><path d="M2 15 C2 5 36 5 36 15" fill="none" stroke="#fff" stroke-width="4"/><path d="M11 9 v6 M27 9 v6" stroke="#fff" stroke-width="3"/></svg><svg style="left:1326px;top:825px" width="28" height="14" viewBox="0 0 28 14"><circle cx="13" cy="13" r="11" fill="none" stroke="#eee" stroke-width="2.2"/><circle cx="13" cy="7.5" r="1.4" fill="#eee"/><rect x="11.8" y="10" width="2.4" height="6" fill="#eee"/></svg><svg style="left:1386px;top:825px" width="26" height="14" viewBox="0 0 26 14"><path d="M1.5 14 v-12.5 h22 v12.5" fill="none" stroke="#eee" stroke-width="2.4"/><path d="M6 6 h14 M6 10 h14" stroke="#eee" stroke-width="2"/></svg><svg style="left:1448px;top:826px" width="22" height="14" viewBox="0 0 22 14" fill="#eee"><circle cx="3" cy="3" r="2.2"/><circle cx="10" cy="3" r="2.2"/><circle cx="17" cy="3" r="2.2"/><circle cx="3" cy="10" r="2.2"/><circle cx="10" cy="10" r="2.2"/><circle cx="17" cy="10" r="2.2"/></svg><svg style="left:1508px;top:822px" width="22" height="18" viewBox="0 0 22 18"><path d="M6 10 v-3 a5 5 0 0 1 10 0 v3" fill="none" stroke="#eee" stroke-width="2.4"/><rect x="2" y="10" width="18" height="10" fill="#eee"/></svg>
</body></html>
